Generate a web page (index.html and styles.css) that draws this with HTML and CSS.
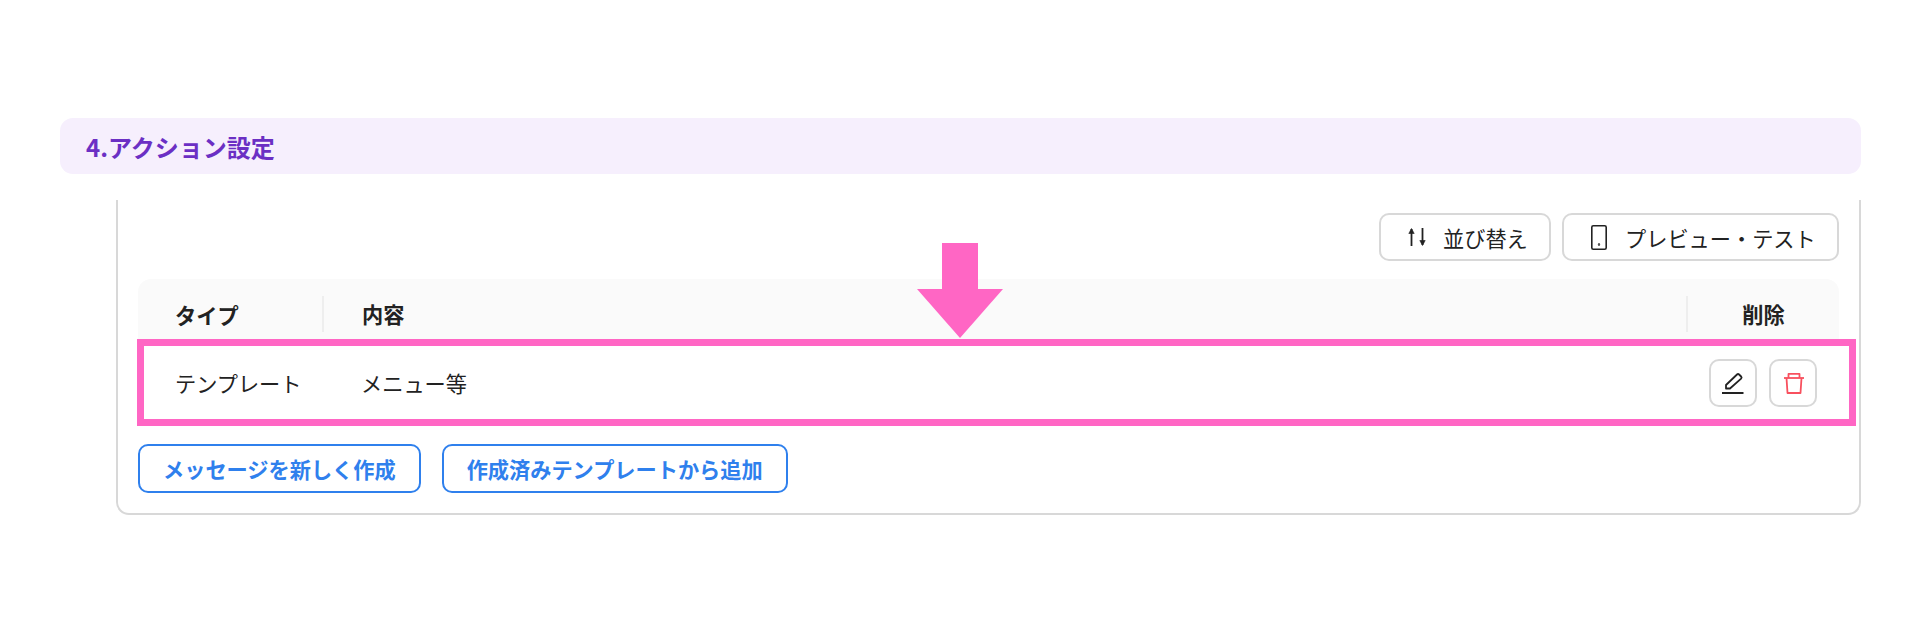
FILE: index.html
```html
<!DOCTYPE html>
<html lang="ja">
<head>
    <meta charset="UTF-8">
    <title>アクション設定</title>
    <link rel="stylesheet" href="styles.css">
</head>
<body>
    <main class="page">
        <h2 class="section-title">4.アクション設定</h2>

        <div class="card">
            <div class="toolbar">
                <button class="tool-button">
                    <svg class="sort-icon" viewBox="0 0 18 20" width="18" height="20" fill="none" stroke="#222" stroke-width="1.800">
                        <path d="M3.500 19V2"/>
                        <path d="M0.800 6.500L3.500 1.500 6.200 6.500z" fill="#222" stroke-width="0.600"/>
                        <path d="M14.500 1v17"/>
                        <path d="M11.800 13.500L14.500 18.500 17.200 13.500z" fill="#222" stroke-width="0.600"/>
                    </svg>
                    並び替え
                </button>
                <button class="tool-button preview-button">
                    <svg class="phone-icon" viewBox="0 0 16 25" width="16" height="25" fill="none" stroke="#222" stroke-width="1.600">
                        <rect x="0.800" y="0.800" width="14.400" height="23.400" rx="1.500"/>
                        <circle cx="8" cy="19.500" r="0.400"/>
                    </svg>
                    プレビュー・テスト
                </button>
            </div>

            <div class="table">
                <div class="table-head">
                    <div class="col-type">タイプ</div>
                    <div class="col-content">内容</div>
                    <div class="col-delete">削除</div>
                </div>
                <div class="table-row">
                    <div class="col-type">テンプレート</div>
                    <div class="col-content">メニュー等</div>
                    <div class="col-delete row-actions">
                        <button class="icon-button">
                            <svg viewBox="0 0 24 24" width="24" height="24" fill="none" stroke="#222" stroke-width="1.800" stroke-linejoin="round">
                                <path d="M5 17.500V14L16 3.500a1.500 1.500 0 0 1 2.100 0l2 2a1.500 1.500 0 0 1 0 2.100L9 17.500z"/>
                                <path d="M1 22h21.500" stroke-width="2"/>
                            </svg>
                        </button>
                        <button class="icon-button">
                            <svg viewBox="0 0 24 24" width="24" height="24" fill="none" stroke="#f8505e" stroke-width="1.800" stroke-linejoin="round">
                                <path d="M3 7h20"/>
                                <path d="M7.500 7V2.900h11V7"/>
                                <path d="M5.500 7l1 15h13l1-15"/>
                            </svg>
                        </button>
                    </div>
                </div>
            </div>

            <div class="add-buttons">
                <button class="add-button">メッセージを新しく作成</button>
                <button class="add-button">作成済みテンプレートから追加</button>
            </div>
        </div>
    </main>

    <!-- annotation drawn over the screenshot -->
    <div class="highlight-box"></div>
    <div class="arrow-shaft"></div>
    <div class="arrow-head"></div>
</body>
</html>
```

FILE: styles.css
```css
* {
    margin: 0;
    padding: 0;
    box-sizing: border-box;
    font-family: 'Noto Sans CJK JP', 'Noto Sans', sans-serif;
}

body {
    background-color: #fff;
    color: #222;
    overflow: hidden;
}

.page {
    padding: 118px 59px 0 60px;
}

.section-title {
    height: 56px;
    padding-left: 26px;
    background-color: #f6effd;
    border-radius: 13px;
    color: #6b2fc4;
    font-size: 24px;
    font-weight: 700;
    line-height: 57px;
}

.card {
    margin: 26px 0 0 56px;
    padding: 13px 20px 20px;
    border: 2px solid #d8d8d8;
    border-top: none;
    border-radius: 0 0 13px 13px;
}

.toolbar {
    display: flex;
    justify-content: flex-end;
    gap: 11px;
}

button {
    background-color: #fff;
    cursor: pointer;
}

.tool-button {
    display: flex;
    align-items: center;
    gap: 17px;
    width: 172px;
    height: 48px;
    padding-left: 27px;
    border: 2px solid #d8d8d8;
    border-radius: 10px;
    color: #222;
    font-size: 21.2px;
}

.preview-button {
    width: 277px;
    padding-left: 27px;
    gap: 18px;
}

.table {
    margin-top: 18px;
}

.table-head,
.table-row {
    display: flex;
    align-items: center;
    font-size: 21.2px;
}

.table-head {
    height: 61px;
    padding-top: 9px;
    background-color: #fafafa;
    border-radius: 13px 13px 0 0;
    font-weight: 700;
}

.table-row {
    height: 86px;
    border-bottom: 1px solid #eee;
}

.col-type {
    width: 184px;
    padding-left: 37px;
}

.col-content {
    flex: 1;
    padding-left: 38px;
}

.col-delete {
    width: 153px;
    text-align: center;
}

.table-head .col-content,
.table-head .col-delete {
    height: 36px;
    line-height: 36px;
    border-left: 2px solid #eee;
}

.table-row .col-content {
    padding-left: 39px;
}

.row-actions {
    display: flex;
    gap: 12px;
    padding-left: 23px;
}

.icon-button {
    display: flex;
    align-items: center;
    justify-content: center;
    width: 48px;
    height: 48px;
    border: 2px solid #d8d8d8;
    border-radius: 10px;
}

.add-buttons {
    display: flex;
    gap: 21px;
    margin-top: 18px;
}

.add-button {
    height: 49px;
    padding: 0 23px;
    border: 2px solid #2f80ed;
    border-radius: 10px;
    color: #2f80ed;
    font-size: 21.2px;
    font-weight: 700;
}

.highlight-box {
    position: absolute;
    left: 137px;
    top: 339px;
    width: 1719px;
    height: 87px;
    border: 7px solid #ff66c4;
}

.arrow-shaft {
    position: absolute;
    left: 942px;
    top: 243px;
    width: 36px;
    height: 46px;
    background-color: #ff66c4;
}

.arrow-head {
    position: absolute;
    left: 917px;
    top: 289px;
    width: 0;
    height: 0;
    border-left: 43px solid transparent;
    border-right: 43px solid transparent;
    border-top: 49px solid #ff66c4;
}
```
